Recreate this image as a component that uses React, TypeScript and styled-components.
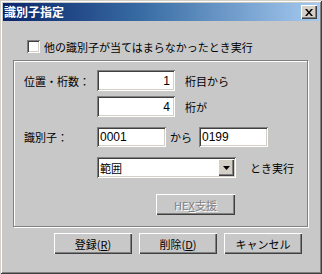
import React from 'react'
import styled, { createGlobalStyle } from 'styled-components'

const face = '#c8c8c8'
const font = `"Noto Sans CJK JP", "Noto Sans", sans-serif`

const GlobalStyle = createGlobalStyle`
  body {
    margin: 0;
    background: ${face};
    font-family: ${font};
  }
`

const Window = styled.div`
  width: 322px;
  height: 274px;
  box-sizing: border-box;
  padding: 3px;
  background: ${face};
  box-shadow: inset 1px 1px #d4d0c8, inset -1px -1px #404040, inset 2px 2px #fff,
    inset -2px -2px #808080;
  display: flex;
  flex-direction: column;
`

const TitleBar = styled.div`
  height: 18px;
  display: flex;
  align-items: center;
  justify-content: space-between;
  padding: 0 2px 0 1px;
  background: linear-gradient(90deg, #0a246a 0%, #3a6ea5 45%, #a6caf0 100%);
`

const Title = styled.span`
  color: #fff;
  font-size: 12px;
  font-weight: 700;
  line-height: 18px;
`

const CloseButton = styled.div`
  width: 16px;
  height: 14px;
  box-sizing: border-box;
  background: #d4d0c8;
  box-shadow: inset 1px 1px #fff, inset -1px -1px #404040, inset -2px -2px #808080;
  display: flex;
  align-items: center;
  justify-content: center;
`

const CheckRow = styled.label`
  display: flex;
  align-items: center;
  gap: 4px;
  margin: 19px 0 0 24px;
  height: 13px;
  font-size: 11px;
  color: #000;
`

const CheckBox = styled.span`
  width: 13px;
  height: 13px;
  box-sizing: border-box;
  background: #fff;
  box-shadow: inset 1px 1px #808080, inset -1px -1px #fff, inset 2px 2px #404040,
    inset -2px -2px #d4d0c8;
`

const Group = styled.div`
  margin: 7px 11px 0 10px;
  height: 167px;
  box-sizing: border-box;
  border: 1px solid #808080;
  box-shadow: inset 1px 1px #fff, 1px 1px #fff;
  padding: 9px 0 0 10px;
  display: flex;
  flex-direction: column;
  font-size: 11px;
  color: #000;
`

const Row = styled.div<{ $top: number; $h: number }>`
  display: flex;
  align-items: center;
  height: ${p => p.$h}px;
  margin-top: ${p => p.$top}px;
`

const Label = styled.span`
  width: 73px;
  flex: none;
  font-size: 11px;
`

const Field = styled.div<{ $w: number; $h: number; $right?: boolean }>`
  width: ${p => p.$w}px;
  height: ${p => p.$h}px;
  box-sizing: border-box;
  background: #fff;
  box-shadow: inset 1px 1px #808080, inset -1px -1px #fff, inset 2px 2px #404040,
    inset -2px -2px #d4d0c8;
  display: flex;
  align-items: center;
  justify-content: ${p => (p.$right ? 'flex-end' : 'flex-start')};
  padding: ${p => (p.$right ? '0 5px 0 0' : '0 0 0 3px')};
  font-family: "Liberation Sans", ${font};
  font-size: 12px;
  color: #000;
`

const Trail = styled.span<{ $gap: number }>`
  margin-left: ${p => p.$gap}px;
  font-size: 11px;
`

const Combo = styled(Field)`
  justify-content: space-between;
  padding: 0 2px 0 3px;
  font-family: ${font};
  font-size: 11px;
`

const ArrowButton = styled.div`
  width: 16px;
  height: 17px;
  box-sizing: border-box;
  background: #d4d0c8;
  box-shadow: inset 1px 1px #fff, inset -1px -1px #404040, inset -2px -2px #808080;
  display: flex;
  align-items: center;
  justify-content: center;
`

const Button = styled.div<{ $disabled?: boolean }>`
  width: ${p => (p.$disabled ? 79 : 78)}px;
  height: 21px;
  box-sizing: border-box;
  background: ${face};
  box-shadow: inset 1px 1px #fff, inset -1px -1px #404040, inset -2px -2px #808080;
  display: flex;
  align-items: center;
  justify-content: center;
  font-size: 11px;
  color: ${p => (p.$disabled ? '#808080' : '#000')};
  text-shadow: ${p => (p.$disabled ? '1px 1px #fff' : 'none')};
  u {
    text-decoration: underline;
    text-underline-offset: 1px;
  }
`

const HexButton = styled(Button)`
  margin-left: 132px;
`

const ButtonRow = styled.div`
  display: flex;
  justify-content: flex-end;
  gap: 7px;
  margin: 6px 17px 0 0;
`

export default function App() {
  return (
    <>
      <GlobalStyle />
      <Window>
        <TitleBar>
          <Title>識別子指定</Title>
          <CloseButton>
            <svg width="8" height="7" viewBox="0 0 8 7">
              <path d="M0 0h2l2 2.5L6 0h2L5 3.5 8 7H6L4 4.5 2 7H0l3-3.5z" fill="#000" />
            </svg>
          </CloseButton>
        </TitleBar>
        <CheckRow>
          <CheckBox />
          他の識別子が当てはまらなかったとき実行
        </CheckRow>
        <Group>
          <Row $top={0} $h={21}>
            <Label>位置・桁数：</Label>
            <Field $w={78} $h={21} $right>1</Field>
            <Trail $gap={10}>桁目から</Trail>
          </Row>
          <Row $top={5} $h={21}>
            <Label />
            <Field $w={78} $h={21} $right>4</Field>
            <Trail $gap={10}>桁が</Trail>
          </Row>
          <Row $top={10} $h={20}>
            <Label>識別子：</Label>
            <Field $w={69} $h={20}>0001</Field>
            <Trail $gap={4}>から</Trail>
            <Trail $gap={7}>
              <Field $w={69} $h={20}>0199</Field>
            </Trail>
          </Row>
          <Row $top={10} $h={21}>
            <Label />
            <Combo $w={139} $h={21}>
              範囲
              <ArrowButton>
                <svg width="7" height="4" viewBox="0 0 7 4">
                  <path d="M0 0h7L3.5 4z" fill="#000" />
                </svg>
              </ArrowButton>
            </Combo>
            <Trail $gap={14}>とき実行</Trail>
          </Row>
          <Row $top={16} $h={21}>
            <HexButton $disabled>
              HE<u>X</u>支援
            </HexButton>
          </Row>
        </Group>
        <ButtonRow>
          <Button>
            登録(<u>R</u>)
          </Button>
          <Button>
            削除(<u>D</u>)
          </Button>
          <Button>キャンセル</Button>
        </ButtonRow>
      </Window>
    </>
  )
}
